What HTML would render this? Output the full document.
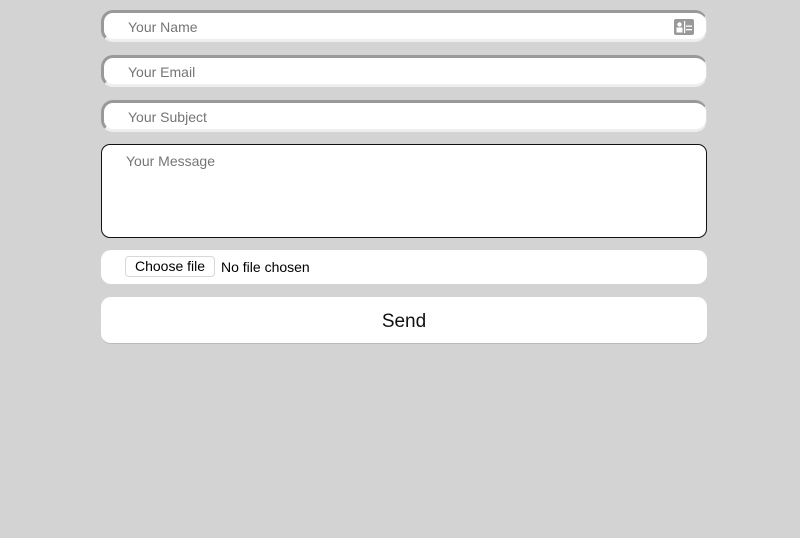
<!DOCTYPE html>
<html><head><style>
body{margin:0;background:#d3d3d3;width:800px;height:538px;position:relative;font-family:"Liberation Sans",sans-serif;overflow:hidden}
.f{position:absolute;left:101px;width:606px;box-sizing:border-box;background:#fff;border-radius:12px}
.in{height:32px;border-top:3px solid #999;border-left:3px solid #999;border-right:1px solid #ddd;border-bottom:3px solid #eee}
.ph{position:absolute;left:24px;top:6px;font-size:14px;color:#757575}
</style></head><body>
<div class="f in" style="top:10px"><span class="ph">Your Name</span>
<svg style="position:absolute;left:570px;top:6px" width="20" height="16" viewBox="0 0 20 16"><rect x="0" y="0" width="20" height="16" rx="2" fill="#999"/><circle cx="5.5" cy="5.5" r="2.2" fill="#fff"/><rect x="2.5" y="8.5" width="6" height="5" fill="#fff"/><rect x="10" y="2" width="1.2" height="12" fill="#fff"/><rect x="12" y="6.5" width="6" height="1.3" fill="#fff"/><rect x="12" y="10" width="6" height="1.3" fill="#fff"/></svg></div>
<div class="f in" style="top:55px"><span class="ph">Your Email</span></div>
<div class="f in" style="top:100px"><span class="ph">Your Subject</span></div>
<div class="f" style="top:144px;height:94px;border:1.5px solid #111;border-radius:9px"><span class="ph" style="left:24px;top:8px">Your Message</span></div>
<div class="f" style="top:250px;height:34px;border-radius:10px">
<span style="position:absolute;left:24px;top:6px;height:21px;width:90px;box-sizing:border-box;border:1px solid #d8d8d8;border-radius:4px;font-size:14px;line-height:19px;text-align:center;color:#000">Choose file</span>
<span style="position:absolute;left:120px;top:9px;font-size:14px;color:#000">No file chosen</span></div>
<div class="f" style="top:297px;height:47px;border-radius:10px;border-bottom:1px solid #bbb;text-align:center;font-size:19px;line-height:50px;color:#111">Send</div>
</body></html>
